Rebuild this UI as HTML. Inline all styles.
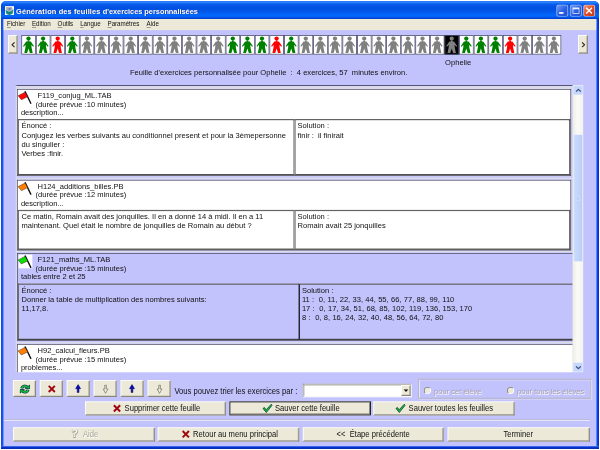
<!DOCTYPE html>
<html><head><meta charset="utf-8">
<style>
html,body{margin:0;padding:0;background:#fff;}
body{width:600px;height:450px;overflow:hidden;position:relative;filter:blur(0.3px);}
#root{left:0;top:0;width:6000px;height:4500px;transform:scale(0.1);transform-origin:0 0;font-family:"Liberation Sans",sans-serif;font-size:76px;line-height:87.9px;color:#111;}
div,span{position:absolute;box-sizing:border-box;white-space:nowrap;}
#win{left:10px;top:10px;width:5980px;height:4479px;background:linear-gradient(90deg,#1c3fe0 0,#0f55ee 13px,#3f76f4 26px,#3f76f4 5940px,#5a88f8 5952px,#1048ea 5962px,#0534d6 5972px,#0a26a8 5980px);border-radius:50px 50px 0 0;overflow:hidden;}
#title{left:0;top:0;width:5980px;height:181px;background:linear-gradient(#2f6fe8 0%,#2c8aff 6%,#0a5cec 17%,#0150e0 36%,#0255e6 56%,#0365fc 76%,#0260f6 88%,#0042d4 96%,#0038c8 100%);}
#ttext{left:150px;top:41px;font-weight:bold;font-size:79px;line-height:120px;color:#fff;text-shadow:6px 6px 4px #0a2a8a;transform:scaleX(0.9475);transform-origin:0 0;}
#client{left:26px;top:180px;width:5926px;height:4271px;background:#c2c2fc;}
#menu{left:0;top:0;width:100%;height:111px;background:#ece9d8;}
.mi{top:5px;font-size:65px;letter-spacing:-0.7px;transform:scaleX(0.96);transform-origin:0 0;line-height:90px;color:#111;}
.mi u{text-decoration:underline;text-underline-offset:8px;text-decoration-thickness:5px;text-decoration-color:#555;}
.tile{top:351px;width:146.2px;height:195px;border:8.5px solid #4a4a70;}
.tile svg{position:absolute;left:-11px;top:-8px;}
.btn{background:#ece9d8;border-top:8px solid #fff;border-left:8px solid #fff;border-right:9px solid #7e7c72;border-bottom:9px solid #7e7c72;box-shadow:inset -6px -6px 0 #bebbac;}
.btxt{font-size:82px;line-height:90px;transform:scaleX(0.9267);transform-origin:0 0;}
.panel{left:170px;width:5541px;border:7px solid #46465e;background:#fff;}
.box{border:12px solid #646464;border-right-color:#4a4a4a;border-bottom-color:#404040;}
.flag{position:absolute;left:-1px;top:-3px;}
.t{font-size:81.5px;line-height:87.9px;transform:scaleX(0.9267);transform-origin:0 0;}
.ta{line-height:91px;}
.dis{color:#a8a4aa;text-shadow:7px 7px 0 #fff;}
</style></head><body><div id="root">
<svg width="0" height="0" style="position:absolute"><defs>
<g id="man"><circle cx="7.5" cy="3.5" r="2.15"/><path d="M6.7 5.3 L8.3 5.3 L8.4 6.4 L9.8 6.5 L12.95 10.9 L12.2 11.7 L10.4 9.7 L10.6 12.7 L11.7 17.8 L8.9 17.8 L7.5 13.5 L6.1 17.8 L3.3 17.8 L4.4 12.7 L4.6 9.7 L2.8 11.7 L2.05 10.9 L5.2 6.5 L6.6 6.4Z"/></g>
</defs></svg>
<div id="win">
<div id="title"></div>
<svg style="position:absolute;left:40px;top:51px" width="90" height="90" viewBox="0 0 9 9"><rect width="9" height="9" fill="#f4f6f8"/><path d="M1.2 1.4 L6.6 1 L7.8 3.4 L4.4 5.2 L1 3.8Z" fill="#a4a8b0"/><path d="M1 1.2 L3.4 1 L3 2.8 L1 3.4Z" fill="#d0b498"/><circle cx="4.6" cy="3" r="1.1" fill="#5a86c4"/><path d="M0.6 4 L4.4 5.6 L8.6 3.4 L7.4 7.8 L4.4 8.8 L1.4 7.8Z" fill="#168c84"/><path d="M4.4 5.6 L4.4 8.8" stroke="#0a5a58" stroke-width="0.5"/></svg>
<div id="ttext"><span style="position:static;letter-spacing:1px">Génération des feuilles </span><span style="position:static;letter-spacing:-0.8px">d'exercices personnalisées</span></div>
<!-- window buttons -->
<div style="left:5554px;top:38px;width:118px;height:118px;border:7.5px solid rgba(255,255,255,0.6);border-radius:20px;background:linear-gradient(135deg,#6a9cf8,#2a5ee0 55%,#2450cc);"><div style="left:20px;top:66px;width:44px;height:17px;background:#fff"></div></div>
<div style="left:5689px;top:38px;width:118px;height:118px;border:7.5px solid rgba(255,255,255,0.6);border-radius:20px;background:linear-gradient(135deg,#6a9cf8,#2a5ee0 55%,#2450cc);"><div style="left:20px;top:21px;width:68px;height:62px;border:7.5px solid rgba(255,255,255,0.9);border-top-width:17px"></div></div>
<div style="left:5823px;top:38px;width:118px;height:118px;border:7.5px solid rgba(255,255,255,0.65);border-radius:20px;background:linear-gradient(135deg,#f09878,#e04c28 50%,#c43612);"><svg style="position:absolute;left:16px;top:16px" width="70" height="70" viewBox="0 0 7 7"><path d="M0.6 0.6 L6.4 6.4 M6.4 0.6 L0.6 6.4" stroke="#fff" stroke-width="1.4"/></svg></div>
<div style="left:0;top:4449px;width:5980px;height:30px;background:linear-gradient(#5a88f8,#0a3ce0 35%,#0028c0 70%,#0a1e98);"></div>
<div id="client">
<div id="menu">
<span class="mi" style="left:34px"><u>F</u>ichier</span>
<span class="mi" style="left:284px"><u>E</u>dition</span>
<span class="mi" style="left:540px"><u>O</u>utils</span>
<span class="mi" style="left:766px"><u>L</u>angue</span>
<span class="mi" style="left:1040px"><u>P</u>aramètres</span>
<span class="mi" style="left:1430px"><u>A</u>ide</span>
</div>
</div>
</div>

<!-- everything below positioned in page coords -->
<div class="btn" style="left:80px;top:350px;width:96px;height:186px;"><svg style="position:absolute;left:24px;top:60px" width="40" height="60" viewBox="0 0 4 6"><path d="M3.4 0.6 L0.8 3 L3.4 5.4" stroke="#222" stroke-width="1.1" fill="none"/></svg></div>
<div class="tile" style="left:213.3px;background:#fff"><svg viewBox="0 0 14.6 19.5" width="146" height="195"><use href="#man" fill="#008000"/></svg></div>
<div class="tile" style="left:359.2px;background:#fff"><svg viewBox="0 0 14.6 19.5" width="146" height="195"><use href="#man" fill="#008000"/></svg></div>
<div class="tile" style="left:505.2px;background:#fff"><svg viewBox="0 0 14.6 19.5" width="146" height="195"><use href="#man" fill="#ff0000"/></svg></div>
<div class="tile" style="left:651.1px;background:#fff"><svg viewBox="0 0 14.6 19.5" width="146" height="195"><use href="#man" fill="#008000"/></svg></div>
<div class="tile" style="left:797px;background:#fff"><svg viewBox="0 0 14.6 19.5" width="146" height="195"><use href="#man" fill="#808080"/></svg></div>
<div class="tile" style="left:943px;background:#fff"><svg viewBox="0 0 14.6 19.5" width="146" height="195"><use href="#man" fill="#808080"/></svg></div>
<div class="tile" style="left:1088.9px;background:#fff"><svg viewBox="0 0 14.6 19.5" width="146" height="195"><use href="#man" fill="#808080"/></svg></div>
<div class="tile" style="left:1234.8px;background:#fff"><svg viewBox="0 0 14.6 19.5" width="146" height="195"><use href="#man" fill="#808080"/></svg></div>
<div class="tile" style="left:1380.7px;background:#fff"><svg viewBox="0 0 14.6 19.5" width="146" height="195"><use href="#man" fill="#808080"/></svg></div>
<div class="tile" style="left:1526.7px;background:#fff"><svg viewBox="0 0 14.6 19.5" width="146" height="195"><use href="#man" fill="#808080"/></svg></div>
<div class="tile" style="left:1672.6px;background:#fff"><svg viewBox="0 0 14.6 19.5" width="146" height="195"><use href="#man" fill="#808080"/></svg></div>
<div class="tile" style="left:1818.5px;background:#fff"><svg viewBox="0 0 14.6 19.5" width="146" height="195"><use href="#man" fill="#808080"/></svg></div>
<div class="tile" style="left:1964.5px;background:#fff"><svg viewBox="0 0 14.6 19.5" width="146" height="195"><use href="#man" fill="#808080"/></svg></div>
<div class="tile" style="left:2110.4px;background:#fff"><svg viewBox="0 0 14.6 19.5" width="146" height="195"><use href="#man" fill="#808080"/></svg></div>
<div class="tile" style="left:2256.3px;background:#fff"><svg viewBox="0 0 14.6 19.5" width="146" height="195"><use href="#man" fill="#008000"/></svg></div>
<div class="tile" style="left:2402.3px;background:#fff"><svg viewBox="0 0 14.6 19.5" width="146" height="195"><use href="#man" fill="#008000"/></svg></div>
<div class="tile" style="left:2548.2px;background:#fff"><svg viewBox="0 0 14.6 19.5" width="146" height="195"><use href="#man" fill="#008000"/></svg></div>
<div class="tile" style="left:2694.1px;background:#fff"><svg viewBox="0 0 14.6 19.5" width="146" height="195"><use href="#man" fill="#ff0000"/></svg></div>
<div class="tile" style="left:2840px;background:#fff"><svg viewBox="0 0 14.6 19.5" width="146" height="195"><use href="#man" fill="#008000"/></svg></div>
<div class="tile" style="left:2986px;background:#fff"><svg viewBox="0 0 14.6 19.5" width="146" height="195"><use href="#man" fill="#808080"/></svg></div>
<div class="tile" style="left:3131.9px;background:#fff"><svg viewBox="0 0 14.6 19.5" width="146" height="195"><use href="#man" fill="#808080"/></svg></div>
<div class="tile" style="left:3277.8px;background:#fff"><svg viewBox="0 0 14.6 19.5" width="146" height="195"><use href="#man" fill="#808080"/></svg></div>
<div class="tile" style="left:3423.8px;background:#fff"><svg viewBox="0 0 14.6 19.5" width="146" height="195"><use href="#man" fill="#808080"/></svg></div>
<div class="tile" style="left:3569.7px;background:#fff"><svg viewBox="0 0 14.6 19.5" width="146" height="195"><use href="#man" fill="#808080"/></svg></div>
<div class="tile" style="left:3715.6px;background:#fff"><svg viewBox="0 0 14.6 19.5" width="146" height="195"><use href="#man" fill="#808080"/></svg></div>
<div class="tile" style="left:3861.5px;background:#fff"><svg viewBox="0 0 14.6 19.5" width="146" height="195"><use href="#man" fill="#808080"/></svg></div>
<div class="tile" style="left:4007.5px;background:#fff"><svg viewBox="0 0 14.6 19.5" width="146" height="195"><use href="#man" fill="#808080"/></svg></div>
<div class="tile" style="left:4153.4px;background:#fff"><svg viewBox="0 0 14.6 19.5" width="146" height="195"><use href="#man" fill="#808080"/></svg></div>
<div class="tile" style="left:4299.3px;background:#fff"><svg viewBox="0 0 14.6 19.5" width="146" height="195"><use href="#man" fill="#808080"/></svg></div>
<div class="tile" style="left:4445.3px;background:#000"><svg viewBox="0 0 14.6 19.5" width="146" height="195"><use href="#man" fill="#808080"/></svg></div>
<div class="tile" style="left:4591.2px;background:#fff"><svg viewBox="0 0 14.6 19.5" width="146" height="195"><use href="#man" fill="#008000"/></svg></div>
<div class="tile" style="left:4737.1px;background:#fff"><svg viewBox="0 0 14.6 19.5" width="146" height="195"><use href="#man" fill="#008000"/></svg></div>
<div class="tile" style="left:4883.1px;background:#fff"><svg viewBox="0 0 14.6 19.5" width="146" height="195"><use href="#man" fill="#008000"/></svg></div>
<div class="tile" style="left:5029px;background:#fff"><svg viewBox="0 0 14.6 19.5" width="146" height="195"><use href="#man" fill="#ff0000"/></svg></div>
<div class="tile" style="left:5174.9px;background:#fff"><svg viewBox="0 0 14.6 19.5" width="146" height="195"><use href="#man" fill="#808080"/></svg></div>
<div class="tile" style="left:5320.9px;background:#fff"><svg viewBox="0 0 14.6 19.5" width="146" height="195"><use href="#man" fill="#808080"/></svg></div>
<div class="tile" style="left:5466.8px;background:#fff"><svg viewBox="0 0 14.6 19.5" width="146" height="195"><use href="#man" fill="#808080"/></svg></div>

<div class="btn" style="left:5780px;top:350px;width:98px;height:186px;"><svg style="position:absolute;left:26px;top:60px" width="40" height="60" viewBox="0 0 4 6"><path d="M0.6 0.6 L3.2 3 L0.6 5.4" stroke="#222" stroke-width="1.1" fill="none"/></svg></div>
<div class="t" id="oph" style="left:4451px;top:579px;">Ophelie</div>
<div class="t" id="hdr" style="left:1300px;top:673px;">Feuille d'exercices personnalisée pour Ophelie&nbsp; :&nbsp; 4 exercices, 57&nbsp; minutes environ.</div>

<!-- scroll pane -->
<div id="sp" style="left:158px;top:850px;width:5569px;height:2872px;background:#cacaf8;border-top:10px solid #55557a;border-left:10px solid #dcdce6;overflow:hidden;"></div>
<div id="spc" style="left:0;top:860px;width:5727px;height:2862px;overflow:hidden;">
<div style="left:168px;top:0;width:5560px;height:30px;background:#dadaea;"></div>
<div style="left:168px;top:918px;width:5560px;height:11px;background:#dcdce6;"></div>
<div style="left:168px;top:1651px;width:5560px;height:11px;background:#dcdce6;"></div>
<div style="left:168px;top:2562px;width:5560px;height:11px;background:#dcdce6;"></div>
 <div class="panel" style="top:30px;height:870px;">
  <svg class="flag" viewBox="-1 -1 15 15" width="150" height="150"><rect width="14" height="14" fill="#fff"/><path d="M6.4 0.9 L12.4 13.3" stroke="#111" stroke-width="1.4" fill="none"/><path d="M6.4 1.8 L-0.5 5.3 L2.8 9.4 L9 6.3 Z" fill="#ff0808" stroke="#402020" stroke-width="0.45"/></svg>
  <div class="t" style="left:198px;top:8px;">F119_conjug_ML.TAB</div>
  <div class="t" style="left:178px;top:96px;">(durée prévue :10 minutes)</div>
  <div class="t" style="left:32px;top:182px;">description...</div>
  <div class="box" style="left:0;top:293px;width:2768px;height:563px;border-right-color:#8a8a8a;"></div>
  <div class="box" style="left:2768px;top:293px;right:0;height:563px;border-left-color:#7e7e7e;"></div>
  <div class="t ta" style="left:38px;top:314px;">Énoncé :<br>Conjugez les verbes suivants au conditionnel present et pour la 3èmepersonne<br>du singulier :<br>Verbes :finir.</div>
  <div class="t ta" style="left:2798px;top:314px;">Solution :<br>finir :&nbsp; il finirait</div>
 </div>
 <div class="panel" style="top:939px;height:706px;">
  <svg class="flag" viewBox="-1 -1 15 15" width="150" height="150"><rect width="14" height="14" fill="#fff"/><path d="M6.4 0.9 L12.4 13.3" stroke="#111" stroke-width="1.4" fill="none"/><path d="M6.4 1.8 L-0.5 5.3 L2.8 9.4 L9 6.3 Z" fill="#ff8000" stroke="#402020" stroke-width="0.45"/></svg>
  <div class="t" style="left:198px;top:8px;">H124_additions_billes.PB</div>
  <div class="t" style="left:178px;top:96px;">(durée prévue :12 minutes)</div>
  <div class="t" style="left:32px;top:182px;">description...</div>
  <div class="box" style="left:0;top:293px;width:2768px;height:399px;border-right-color:#8a8a8a;"></div>
  <div class="box" style="left:2768px;top:293px;right:0;height:399px;border-left-color:#7e7e7e;"></div>
  <div class="t ta" style="left:38px;top:311px;">Ce matin, Romain avait des jonquilles. Il en a donné 14 à midi. Il en a 11<br>maintenant. Quel était le nombre de jonquilles de Romain au début ?</div>
  <div class="t ta" style="left:2798px;top:311px;">Solution :<br>Romain avait 25 jonquilles</div>
 </div>
 <div class="panel" style="top:1672px;height:875px;width:5700px;background:#c2c2fc;">
  <svg class="flag" viewBox="-1 -1 15 15" width="150" height="150"><rect width="14" height="14" fill="#fff"/><path d="M6.4 0.9 L12.4 13.3" stroke="#111" stroke-width="1.4" fill="none"/><path d="M6.4 1.8 L-0.5 5.3 L2.8 9.4 L9 6.3 Z" fill="#08e008" stroke="#402020" stroke-width="0.45"/></svg>
  <div class="t" style="left:198px;top:8px;">F121_maths_ML.TAB</div>
  <div class="t" style="left:178px;top:96px;">(durée prévue :15 minutes)</div>
  <div class="t" style="left:32px;top:182px;">tables entre 2 et 25</div>
  <div class="box" style="left:0;top:297px;width:2812px;height:564px;border-right:none;"></div>
  <div class="box" style="left:2809px;top:297px;right:0;height:564px;border-left:13px solid #15151c;"></div>
  <div class="t ta" style="left:38px;top:317px;">Énoncé :<br>Donner la table de multiplication des nombres suivants:<br>11,17,8.</div>
  <div class="t ta" style="left:2842px;top:316px;word-spacing:2.4px;">Solution :<br>11 :&nbsp; 0, 11, 22, 33, 44, 55, 66, 77, 88, 99, 110<br>17 :&nbsp; 0, 17, 34, 51, 68, 85, 102, 119, 136, 153, 170<br>8 :&nbsp; 0, 8, 16, 24, 32, 40, 48, 56, 64, 72, 80</div>
 </div>
 <div class="panel" style="top:2582px;height:600px;width:5700px;">
  <svg class="flag" viewBox="-1 -1 15 15" width="150" height="150"><rect width="14" height="14" fill="#fff"/><path d="M6.4 0.9 L12.4 13.3" stroke="#111" stroke-width="1.4" fill="none"/><path d="M6.4 1.8 L-0.5 5.3 L2.8 9.4 L9 6.3 Z" fill="#ff8000" stroke="#402020" stroke-width="0.45"/></svg>
  <div class="t" style="left:198px;top:8px;">H92_calcul_fleurs.PB</div>
  <div class="t" style="left:178px;top:96px;">(durée prévue :15 minutes)</div>
  <div class="t" style="left:32px;top:182px;">problemes...</div>
 </div>
</div>
<!-- scrollbar -->
<div style="left:5726px;top:852px;width:106px;height:2870px;background:linear-gradient(90deg,#eeede5,#fbfbf8 50%,#f3f2ea);"></div>
<div style="left:5730px;top:854px;width:100px;height:96px;background:#c4d6fb;border:6px solid #dfe8fb;border-radius:15px;"><svg style="position:absolute;left:18px;top:24px" width="60" height="40" viewBox="0 0 6 4"><path d="M0.6 3.2 L3 0.9 L5.4 3.2" stroke="#3c507c" stroke-width="1.3" fill="none"/></svg></div>
<div style="left:5730px;top:3624px;width:100px;height:96px;background:#c4d6fb;border:6px solid #dfe8fb;border-radius:15px;"><svg style="position:absolute;left:18px;top:26px" width="60" height="40" viewBox="0 0 6 4"><path d="M0.6 0.8 L3 3.1 L5.4 0.8" stroke="#3c507c" stroke-width="1.3" fill="none"/></svg></div>
<div style="left:5734px;top:1344px;width:96px;height:1274px;background:linear-gradient(90deg,#cadcfb,#c0d3f9 60%,#b9cdf6);border:6px solid #dde7fb;border-radius:15px;"><div style="left:26px;top:614px;width:34px;height:46px;border:6px solid #d8e4fb;background:#b8ccf4"></div></div>

<!-- toolbar -->
<div class="btn" style="left:129px;top:3802px;width:230px;height:168px;"><svg style="position:absolute;left:60px;top:33px" width="104" height="96" viewBox="0 0 12 11"><g fill="none" stroke="#083048" stroke-width="3.4"><path d="M2.3 4.7 A3.6 3.3 0 0 1 8.6 3.2"/><path d="M9.7 6.3 A3.6 3.3 0 0 1 3.4 7.8"/></g><path d="M6.6 4.9 L11.6 4.9 L11.6 0.9Z M5.4 6.1 L0.4 6.1 L0.4 10.1Z" fill="#083048" stroke="#083048" stroke-width="1" stroke-linejoin="round"/><g fill="none" stroke="#12c436" stroke-width="1.8"><path d="M2.3 4.7 A3.6 3.3 0 0 1 8.6 3.2"/><path d="M9.7 6.3 A3.6 3.3 0 0 1 3.4 7.8"/></g><path d="M7.6 4.5 L11.2 4.5 L11.2 1.7Z M4.4 6.5 L0.8 6.5 L0.8 9.3Z" fill="#12c436"/></svg></div>
<div class="btn" style="left:398px;top:3802px;width:230px;height:168px;"><svg style="position:absolute;left:71px;top:35px" width="82" height="88" viewBox="0 0 8 8"><path d="M1 1 L7 7 M7 1 L1 7" stroke="#a00812" stroke-width="1.9"/></svg></div>
<div class="btn" style="left:667px;top:3802px;width:230px;height:168px;"><svg style="position:absolute;left:78px;top:31px" width="56" height="90" viewBox="0 0 6 9"><path d="M3 0.2 L5.8 4.6 L3.9 4.6 L3.9 8.6 L2.1 8.6 L2.1 4.6 L0.2 4.6Z" fill="#0808cc" stroke="#00003c" stroke-width="0.55"/></svg></div>
<div class="btn" style="left:936px;top:3802px;width:230px;height:168px;"><svg style="position:absolute;left:80px;top:36px" width="70" height="100" viewBox="0 0 7 10"><path d="M3.8 9.4 L6.3 5 L4.6 5 L4.6 1 L3 1 L3 5 L1.3 5Z" fill="none" stroke="#fff" stroke-width="0.7"/><path d="M3.2 8.8 L5.7 4.4 L4 4.4 L4 0.4 L2.4 0.4 L2.4 4.4 L0.7 4.4Z" fill="#ece9d8" stroke="#7c7a70" stroke-width="0.8"/></svg></div>
<div class="btn" style="left:1206px;top:3802px;width:230px;height:168px;"><svg style="position:absolute;left:78px;top:31px" width="56" height="90" viewBox="0 0 6 9"><path d="M3 0.2 L5.8 4.6 L3.9 4.6 L3.9 8.6 L2.1 8.6 L2.1 4.6 L0.2 4.6Z" fill="#0808cc" stroke="#00003c" stroke-width="0.55"/></svg></div>
<div class="btn" style="left:1476px;top:3802px;width:230px;height:168px;"><svg style="position:absolute;left:80px;top:36px" width="70" height="100" viewBox="0 0 7 10"><path d="M3.8 9.4 L6.3 5 L4.6 5 L4.6 1 L3 1 L3 5 L1.3 5Z" fill="none" stroke="#fff" stroke-width="0.7"/><path d="M3.2 8.8 L5.7 4.4 L4 4.4 L4 0.4 L2.4 0.4 L2.4 4.4 L0.7 4.4Z" fill="#ece9d8" stroke="#7c7a70" stroke-width="0.8"/></svg></div>
<div class="t" id="vous" style="left:1744px;top:3863px;font-size:82.6px;">Vous pouvez trier les exercices par :</div>
<!-- combo -->
<div style="left:3028px;top:3838px;width:1088px;height:134px;background:#fff;border:8px solid #908e88;border-right-color:#f4f4f8;border-bottom-color:#f4f4f8;box-shadow:inset 6px 6px 0 #5a5850, inset -5px -5px 0 #d8d6cc;"></div>
<div class="btn" style="left:4010px;top:3851px;width:96px;height:109px;"><svg style="position:absolute;left:17px;top:33px" width="50" height="30" viewBox="0 0 5 3"><path d="M0 0 L5 0 L2.5 2.8Z" fill="#111"/></svg></div>
<!-- groupbox -->
<div style="left:4182px;top:3788px;width:1732px;height:198px;border:8px solid #b6b2b6;box-shadow:7px 7px 0 #f2f2ff, inset 7px 7px 0 #f2f2ff;"></div>
<div style="left:4238px;top:3869px;width:72px;height:72px;border-radius:50%;background:#ece9d8;border:9px solid #85837a;border-right-color:#fff;border-bottom-color:#fff;"></div>
<div class="t dis" id="r1" style="left:4340px;top:3866px;">pour cet élève</div>
<div style="left:5070px;top:3869px;width:72px;height:72px;border-radius:50%;background:#ece9d8;border:9px solid #85837a;border-right-color:#fff;border-bottom-color:#fff;"></div>
<div class="t dis" id="r2" style="left:5170px;top:3866px;">pour tous les élèves</div>

<!-- row 2 buttons -->
<div class="btn" style="left:850px;top:4015px;width:1408px;height:139px;"></div>
<svg style="position:absolute;left:1128px;top:4040px" width="84" height="88" viewBox="0 0 8 8"><path d="M1 1 L7 7 M7 1 L1 7" stroke="#a00812" stroke-width="1.9"/></svg>
<div class="btxt" id="b1" style="left:1246px;top:4041px;">Supprimer cette feuille</div>
<div class="btn" style="left:2294px;top:4014px;width:1416px;height:140px;border:10px solid #222;box-shadow:inset 7px 7px 0 #fff, inset -8px -8px 0 #77756a;"></div>
<svg style="position:absolute;left:2621px;top:4036px" width="106" height="96" viewBox="0 0 10 9"><path d="M0.8 4.6 L2.2 3.6 L3.8 5.8 L8.6 0.6 L9.6 1.4 L4 8.4Z" fill="#14b828" stroke="#0c3c48" stroke-width="0.7" stroke-linejoin="round"/></svg>
<div class="btxt" id="b2" style="left:2750px;top:4041px;">Sauver cette feuille</div>
<div class="btn" style="left:3734px;top:4015px;width:1412px;height:139px;"></div>
<svg style="position:absolute;left:3951px;top:4036px" width="106" height="96" viewBox="0 0 10 9"><path d="M0.8 4.6 L2.2 3.6 L3.8 5.8 L8.6 0.6 L9.6 1.4 L4 8.4Z" fill="#14b828" stroke="#0c3c48" stroke-width="0.7" stroke-linejoin="round"/></svg>
<div class="btxt" id="b3" style="left:4086px;top:4041px;">Sauver toutes les feuilles</div>

<!-- separator -->
<div style="left:40px;top:4193px;width:5860px;height:17px;background:#e6e6f2;border-top:6px solid #a8a8d4;"></div>

<!-- bottom buttons -->
<div class="btn" style="left:130px;top:4274px;width:1418px;height:141px;"></div>
<div class="btxt" style="left:718px;top:4284px;font-size:105px;line-height:110px;font-weight:bold;color:#fbfbf6;text-shadow:5px 5px 0 #9a988c,-5px -5px 0 #b0aea2,5px -5px 0 #aaa89c,-5px 5px 0 #aaa89c;">?</div>
<div class="btxt dis" id="b4" style="left:830px;top:4296px;color:#a9a699;">Aide</div>
<div class="btn" style="left:1577px;top:4274px;width:1415px;height:141px;"></div>
<svg style="position:absolute;left:1816px;top:4298px" width="84" height="88" viewBox="0 0 8 8"><path d="M1 1 L7 7 M7 1 L1 7" stroke="#a00812" stroke-width="1.9"/></svg>
<div class="btxt" id="b5" style="left:1931px;top:4296px;">Retour au menu principal</div>
<div class="btn" style="left:3028px;top:4274px;width:1408px;height:141px;"></div>
<div class="btxt" id="b6" style="left:3366px;top:4296px;">&lt;&lt;&nbsp; Étape précédente</div>
<div class="btn" style="left:4476px;top:4274px;width:1422px;height:141px;"></div>
<div class="btxt" id="b7" style="left:5034px;top:4296px;">Terminer</div>
</div></body></html>
